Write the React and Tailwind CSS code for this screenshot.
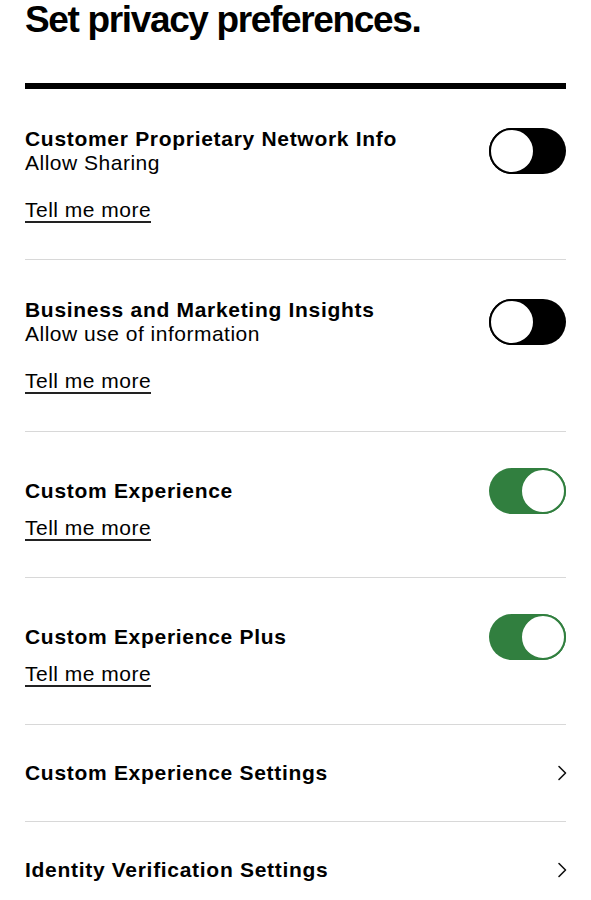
import React from "react";

const Toggle = ({ on }) => (
  <div
    className={`w-[77px] h-[46px] rounded-full flex shrink-0 ${
      on ? "bg-[#317f3f] justify-end" : "bg-black justify-start"
    }`}
  >
    <div
      className={`w-[46px] h-[46px] rounded-full bg-white border-2 ${
        on ? "border-[#317f3f]" : "border-black"
      }`}
    />
  </div>
);

const TellMore = () => (
  <span className="block text-[21px] leading-[22px] tracking-[0.5px] border-b-2 border-[#222] cursor-pointer">
    Tell me more
  </span>
);

const Chevron = () => (
  <svg width="10" height="16" viewBox="0 0 10 16" fill="none" className="shrink-0 -mr-[1px]">
    <path d="M2 1.5L8.5 8L2 14.5" stroke="#111" strokeWidth="1.6" strokeLinecap="round" strokeLinejoin="round" />
  </svg>
);

const prefs = [
  { title: "Customer Proprietary Network Info", sub: "Allow Sharing", on: false, pad: "pt-[38px] pb-[36px]" },
  { title: "Business and Marketing Insights", sub: "Allow use of information", on: false, pad: "pt-[38px] pb-[37px]" },
  { title: "Custom Experience", on: true, pad: "pt-[36px] pb-[36px]" },
  { title: "Custom Experience Plus", on: true, pad: "pt-[36px] pb-[37px]" },
];

export default function App() {
  return (
    <div
      className="w-[591px] min-h-[900px] bg-white text-black px-[25px] overflow-hidden"
      style={{ fontFamily: '"Liberation Sans", Arial, sans-serif' }}
    >
      <h1 className="text-[37px] leading-[40px] font-bold tracking-[-1.35px]">Set privacy preferences.</h1>
      <div className="mt-[43px] h-[6px] bg-black" />

      {prefs.map((p, i) =>
        p.sub ? (
          <div key={i} className={`${p.pad} border-b border-[#d8d8d8]`}>
            <div className="flex items-center justify-between">
              <div className="text-[21px] leading-[24px] tracking-[0.5px]">
                <p className="font-bold tracking-[0.7px]">{p.title}</p>
                <p>{p.sub}</p>
              </div>
              <Toggle on={p.on} />
            </div>
            <div className="mt-[24px] flex">
              <TellMore />
            </div>
          </div>
        ) : (
          <div key={i} className={`${p.pad} border-b border-[#d8d8d8]`}>
            <div className="flex items-center justify-between">
              <p className="text-[21px] leading-[24px] tracking-[0.7px] font-bold">{p.title}</p>
              <Toggle on={p.on} />
            </div>
            <div className="mt-[3px] flex">
              <TellMore />
            </div>
          </div>
        )
      )}

      <div className="py-[36px] flex items-center justify-between border-b border-[#d8d8d8]">
        <p className="text-[21px] leading-[24px] tracking-[0.7px] font-bold">Custom Experience Settings</p>
        <Chevron />
      </div>
      <div className="py-[36px] flex items-center justify-between">
        <p className="text-[21px] leading-[24px] tracking-[0.7px] font-bold">Identity Verification Settings</p>
        <Chevron />
      </div>
    </div>
  );
}
